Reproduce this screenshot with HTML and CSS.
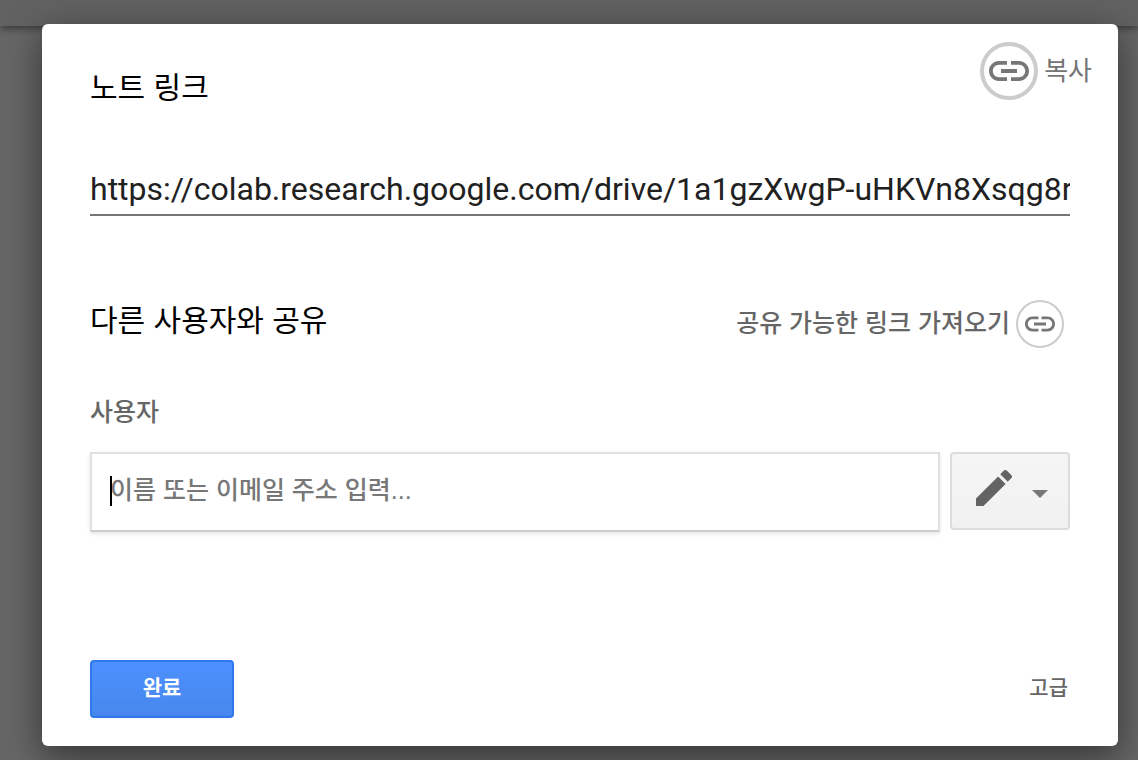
FILE: index.html
```
<!DOCTYPE html>
<html lang="ko">
<head>
  <meta charset="UTF-8">
  <meta name="viewport" content="width=device-width, initial-scale=1.0">
  <title>노트 링크</title>
  <link rel="stylesheet" href="styles.css">
</head>
<body>
  <div class="toolbar"></div>
  <main class="dialog" role="dialog" aria-labelledby="link-title">
    <header class="dialog-header">
      <h1 class="title" id="link-title">노트 링크</h1>
      <button class="copy" type="button">
        <span class="circle circle-large">
          <svg class="icon" viewBox="0 0 24 24" aria-hidden="true"><path d="M3.9 12c0-1.71 1.39-3.1 3.1-3.1h4V7H7c-2.76 0-5 2.24-5 5s2.24 5 5 5h4v-1.9H7c-1.71 0-3.1-1.39-3.1-3.1zM8 13h8v-2H8v2zm9-6h-4v1.9h4c1.71 0 3.1 1.39 3.1 3.1s-1.39 3.1-3.1 3.1h-4V17h4c2.76 0 5-2.24 5-5s-2.24-5-5-5z"/></svg>
        </span>
        <span class="button-text">복사</span>
      </button>
    </header>

    <div class="dialog-body">
      <input class="url" type="text" readonly aria-labelledby="link-title" value="https://colab.research.google.com/drive/1a1gzXwgP-uHKVn8Xsqg8r">

      <div class="share-header">
        <h2 class="title">다른 사용자와 공유</h2>
        <button class="get-link" type="button">
          <span class="button-text">공유 가능한 링크 가져오기</span>
          <span class="circle">
            <svg class="icon" viewBox="0 0 24 24" aria-hidden="true"><path d="M3.9 12c0-1.71 1.39-3.1 3.1-3.1h4V7H7c-2.76 0-5 2.24-5 5s2.24 5 5 5h4v-1.9H7c-1.71 0-3.1-1.39-3.1-3.1zM8 13h8v-2H8v2zm9-6h-4v1.9h4c1.71 0 3.1 1.39 3.1 3.1s-1.39 3.1-3.1 3.1h-4V17h4c2.76 0 5-2.24 5-5s-2.24-5-5-5z"/></svg>
          </span>
        </button>
      </div>

      <label class="people-label" for="people">사용자</label>
      <div class="people-row">
        <div class="people-field">
          <input class="people" id="people" type="text" placeholder="이름 또는 이메일 주소 입력...">
          <span class="caret"></span>
        </div>
        <button class="permission" type="button" aria-haspopup="true" aria-label="수정 가능">
          <svg class="pencil" viewBox="0 0 24 24" aria-hidden="true"><path d="M3 17.25V21h3.75L17.81 9.94l-3.75-3.75L3 17.25zM20.71 7.04c.39-.39.39-1.02 0-1.41l-2.34-2.34c-.39-.39-1.02-.39-1.41 0l-1.83 1.83 3.75 3.75 1.83-1.83z"/></svg>
          <span class="arrow"></span>
        </button>
      </div>

      <footer class="dialog-footer">
        <button class="done" type="button">완료</button>
        <a class="advanced" href="#">고급</a>
      </footer>
    </div>
  </main>
</body>
</html>
```
FILE: styles.css
```
* {
  box-sizing: border-box;
}
body {
  margin: 0;
  min-height: 100vh;
  padding: 24px 20px 14px 42px;
  background: #666;
  font-family: "Liberation Sans", "Noto Sans CJK KR", sans-serif;
  color: #666;
}
h1, h2 {
  margin: 0;
}
button {
  padding: 0;
  border: none;
  background: none;
  color: inherit;
  font-family: inherit;
  cursor: pointer;
}

/* dimmed page header behind the dialog */
.toolbar {
  position: absolute;
  top: 0;
  left: 0;
  right: 0;
  height: 26px;
  background: #626262;
  box-shadow: 0 2px 8px rgba(0, 0, 0, 0.5);
}

.dialog {
  position: relative;
  background: #fff;
  border-radius: 6px;
  box-shadow: 0 10px 36px rgba(0, 0, 0, 0.5);
}
.dialog-header {
  display: flex;
  justify-content: space-between;
  align-items: flex-start;
  padding: 18px 26px 0 48px;
}
.dialog-header .title {
  padding-top: 28px;
}
.dialog-body {
  padding: 60px 48px 28px;
}
.title {
  font-size: 30px;
  line-height: 36px;
  font-weight: 400;
  color: #000;
}

.circle {
  display: flex;
  align-items: center;
  justify-content: center;
  width: 48px;
  height: 48px;
  border: 2px solid #ccc;
  border-radius: 50%;
}
.circle .icon {
  flex: none;
  width: 36px;
  height: 36px;
  fill: #777;
}
.circle-large {
  width: 58px;
  height: 58px;
  border-width: 4px;
}
.circle-large .icon {
  width: 48px;
  height: 48px;
}
.copy, .get-link {
  display: flex;
  align-items: center;
  gap: 6px;
}
.button-text {
  padding-bottom: 6px;
}
.copy {
  font-size: 26px;
  color: #757575;
}
.get-link {
  padding-right: 6px;
  font-size: 25px;
  font-weight: 500;
}

.url {
  display: block;
  width: 100%;
  height: 50px;
  padding: 0 0 2px;
  border: none;
  border-bottom: 2px solid #757575;
  font-family: Roboto, sans-serif;
  font-size: 32px;
  color: #212121;
  outline: none;
}
.share-header {
  display: flex;
  justify-content: space-between;
  margin-top: 84px;
}
.share-header .title {
  line-height: 42px;
}

.people-label {
  display: block;
  margin-top: 48px;
  font-size: 25px;
  line-height: 32px;
  font-weight: 500;
}
.people-row {
  display: flex;
  align-items: flex-start;
  gap: 10px;
  margin-top: 24px;
}
.people-field {
  position: relative;
  flex: 1;
}
.people {
  display: block;
  width: 100%;
  height: 80px;
  padding: 0 18px 4px;
  border: 2px solid #e0e0e0;
  border-bottom-color: #ccc;
  box-shadow: 0 2px 4px rgba(0, 0, 0, 0.1);
  font-family: inherit;
  font-size: 25px;
  font-weight: 500;
  color: #333;
  outline: none;
}
.people::placeholder {
  color: #777;
}
.caret {
  position: absolute;
  top: 24px;
  left: 20px;
  width: 2px;
  height: 30px;
  background: #000;
}
.permission {
  display: flex;
  align-items: flex-start;
  gap: 14px;
  width: 120px;
  height: 78px;
  padding: 10px 18px;
  border: 2px solid #dcdcdc;
  border-radius: 4px;
  background: linear-gradient(#f5f5f5, #f1f1f1);
}
.pencil {
  width: 48px;
  height: 48px;
  fill: #636363;
}
.arrow {
  margin-top: 26px;
  border: 8px solid transparent;
  border-top-color: #777;
  border-bottom: none;
}

.dialog-footer {
  display: flex;
  justify-content: space-between;
  align-items: center;
  margin-top: 128px;
}
.done {
  width: 144px;
  height: 58px;
  padding-bottom: 6px;
  border: 2px solid #3079ed;
  border-radius: 4px;
  background: linear-gradient(#4d90fe, #4787ed);
  color: #fff;
  font-size: 21px;
  font-weight: 700;
}
.advanced {
  padding: 0 2px 6px;
  color: #666;
  font-size: 21px;
  font-weight: 500;
  text-decoration: none;
}
```
